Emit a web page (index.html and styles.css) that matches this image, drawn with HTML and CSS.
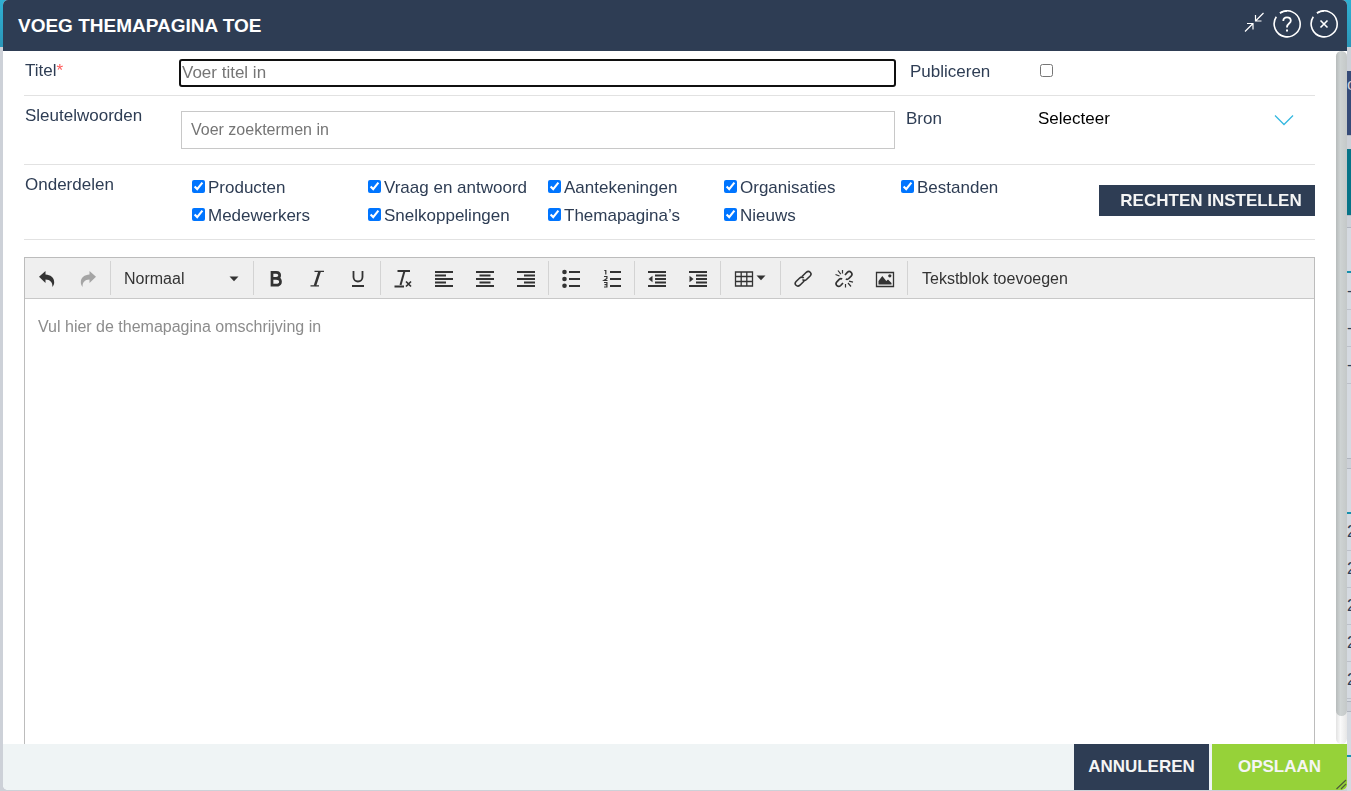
FILE: index.html
```html
<!DOCTYPE html>
<html lang="nl">
<head>
<meta charset="utf-8">
<meta name="viewport" content="width=device-width, initial-scale=1">
<title>Voeg themapagina toe</title>
<link rel="stylesheet" href="styles.css">
</head>
<body>
<div class="backdrop" aria-hidden="true">
  <div class="backdrop-bar"></div>
  <div class="backdrop-side">
    <div class="tile tile-blue">ol</div>
    <div class="tile tile-teal"></div>
    <div class="list list-top">
      <span class="list-head"></span>
      <span class="list-row">-</span><span class="list-row">-</span><span class="list-row">-</span>
    </div>
    <div class="list list-mid">
      <span class="list-head"></span>
      <span class="list-row">2</span><span class="list-row">2</span><span class="list-row">2</span><span class="list-row">2</span><span class="list-row">2</span>
    </div>
    <div class="list list-end"><span class="list-head"></span></div>
  </div>
</div>

<form class="dialog" role="dialog" aria-labelledby="dialog-title">
  <header class="dialog-header">
    <h1 class="dialog-title" id="dialog-title">VOEG THEMAPAGINA TOE</h1>
    <div class="header-actions">
      <button type="button" class="header-btn shrink-btn" aria-label="Verkleinen">
        <svg width="20" height="20" viewBox="0 0 20 20" fill="none" stroke="#fff" stroke-width="1.2"><path d="M19.500 1 11.500 9M11.500 3v6H17.500M1 19.500l8-8M9 17.500v-6H3"/></svg>
      </button>
      <button type="button" class="header-btn" aria-label="Help">
        <svg width="28" height="28" viewBox="0 0 28 28" fill="none" stroke="#fff" stroke-width="1.600"><path d="M3.300 6.700A13 13 0 1 0 7 3"/><path d="M7 3A13 13 0 0 1 14 1"/><path stroke-width="1.800" d="M10.300 11c0-2.400 1.500-3.700 3.700-3.700s3.800 1.300 3.800 3.400c0 2.800-3.800 2.900-3.800 6.300v.5"/><path stroke-width="2" d="M14 19.500v2"/></svg>
      </button>
      <button type="button" class="header-btn" aria-label="Sluiten">
        <svg width="28" height="28" viewBox="0 0 28 28" fill="none" stroke="#fff" stroke-width="1.600"><path d="M3.300 6.700A13 13 0 1 0 7 3"/><path d="M7 3A13 13 0 0 1 14 1"/><path stroke-width="1.600" d="m10.500 10.500 7 7m0-7-7 7"/></svg>
      </button>
    </div>
  </header>

  <div class="dialog-body">
    <div class="fields">
      <div class="row row-title">
        <label class="label" for="titel">Titel<span class="required">*</span></label>
        <input class="title-input" id="titel" type="text" placeholder="Voer titel in" autofocus>
        <div class="side publish">
          <label for="publiceren">Publiceren</label>
          <input class="check" id="publiceren" type="checkbox">
        </div>
      </div>

      <div class="row row-keywords">
        <label class="label" for="sleutelwoorden">Sleutelwoorden</label>
        <input class="keyword-input" id="sleutelwoorden" type="text" placeholder="Voer zoektermen in">
        <div class="side source">
          <label for="bron">Bron</label>
          <div class="select-wrap">
            <select class="select" id="bron"><option>Selecteer</option></select>
            <svg class="select-arrow" width="20" height="12" viewBox="0 0 20 12" fill="none" stroke="#35b8e0" stroke-width="1.300"><path d="m1 1.500 9 9 9-9"/></svg>
          </div>
        </div>
      </div>

      <div class="row row-parts">
        <span class="label" id="parts-label">Onderdelen</span>
        <div class="parts" role="group" aria-labelledby="parts-label">
          <label class="part"><input class="check" type="checkbox" checked>Producten</label>
          <label class="part"><input class="check" type="checkbox" checked>Vraag en antwoord</label>
          <label class="part"><input class="check" type="checkbox" checked>Aantekeningen</label>
          <label class="part"><input class="check" type="checkbox" checked>Organisaties</label>
          <label class="part"><input class="check" type="checkbox" checked>Bestanden</label>
          <label class="part"><input class="check" type="checkbox" checked>Medewerkers</label>
          <label class="part"><input class="check" type="checkbox" checked>Snelkoppelingen</label>
          <label class="part"><input class="check" type="checkbox" checked>Themapagina’s</label>
          <label class="part"><input class="check" type="checkbox" checked>Nieuws</label>
        </div>
        <button type="button" class="rights-btn">RECHTEN INSTELLEN</button>
      </div>

      <div class="editor">
        <div class="toolbar" role="toolbar" aria-label="Opmaak">
          <div class="group">
            <button type="button" class="tool" aria-label="Ongedaan maken"><svg class="icon" viewBox="0 0 20 20"><path fill="#333" d="M2 8.700 8.500 3v3.400c5 .2 8.700 3 8.700 7.800 0 2-.8 3.600-1.900 4.800.6-4.200-2-7.300-6.800-7.400V15z"/></svg></button>
            <button type="button" class="tool" aria-label="Opnieuw"><svg class="icon" viewBox="0 0 20 20"><path fill="#a5a5a5" d="M18 8.700 11.500 3v3.400c-5 .2-8.700 3-8.700 7.800 0 2 .8 3.600 1.900 4.800-.6-4.200 2-7.300 6.800-7.400V15z"/></svg></button>
          </div>
          <div class="group">
            <button type="button" class="format-btn"><span>Normaal</span><svg width="10" height="6" viewBox="0 0 10 6"><path fill="#333" d="M.5.500h9L5 5.200z"/></svg></button>
          </div>
          <div class="group">
            <button type="button" class="tool" aria-label="Vet"><svg class="icon" viewBox="0 0 20 20" fill="none" stroke="#333" stroke-width="2.700"><path d="M5.800 4.300h4.400c4.600 0 4.600 6 0 6H6m4 0c6 0 6 6.900 0 6.900H5.800M6 3v15.500"/></svg></button>
            <button type="button" class="tool" aria-label="Cursief"><svg class="icon" viewBox="0 0 20 20" fill="none" stroke="#333"><path stroke-width="1.400" d="M7.500 3.400H17M3.500 17.900H12"/><path stroke-width="2.500" d="m12.600 3.500-4.700 14.300"/></svg></button>
            <button type="button" class="tool" aria-label="Onderstrepen"><svg class="icon" viewBox="0 0 20 20" fill="none" stroke="#333"><path stroke-width="1.800" d="M5.500 3v6c0 6 9 6 9 0V3"/><path stroke-width="2" d="M4 18h12"/></svg></button>
          </div>
          <div class="group">
            <button type="button" class="tool" aria-label="Opmaak wissen"><svg class="icon" viewBox="0 0 20 20" fill="none" stroke="#333"><path stroke-width="2" d="M4.500 3H17M1.500 18.500H11"/><path stroke-width="2" d="M11.500 3 7.500 17"/><path stroke-width="1.700" d="m13 13.500 5 5m0-5-5 5"/></svg></button>
            <button type="button" class="tool" aria-label="Links uitlijnen"><svg class="icon" viewBox="0 0 20 20" stroke="#333" stroke-width="2"><path d="M1 4h18M1 7.500h11M1 11h18M1 14.500h11M1 18h18"/></svg></button>
            <button type="button" class="tool" aria-label="Centreren"><svg class="icon" viewBox="0 0 20 20" stroke="#333" stroke-width="2"><path d="M1 4h18M4.500 7.500h11M1 11h18M4.500 14.500h11M1 18h18"/></svg></button>
            <button type="button" class="tool" aria-label="Rechts uitlijnen"><svg class="icon" viewBox="0 0 20 20" stroke="#333" stroke-width="2"><path d="M1 4h18M8 7.500h11M1 11h18M8 14.500h11M1 18h18"/></svg></button>
          </div>
          <div class="group">
            <button type="button" class="tool" aria-label="Opsomming"><svg class="icon" viewBox="0 0 20 20" fill="#333" stroke="#333"><path stroke-width="2" d="M8 4h11M8 11h11M8 18h11"/><g stroke="none"><circle cx="3.500" cy="4" r="2.300"/><circle cx="3.500" cy="11" r="2.300"/><circle cx="3.500" cy="17.700" r="2.300"/></g></svg></button>
            <button type="button" class="tool" aria-label="Genummerde lijst"><svg class="icon" viewBox="0 0 20 20" fill="none" stroke="#333"><path stroke-width="2" d="M8 4h11M8 11h11M8 18h11"/><path stroke-width="1.200" d="M2.300 2.500h1.500V6.500M2 8.500h2.900v2L2 12.500h3.500M2 14.500h2.900v4.500H2m.5-2.300h2.300"/></svg></button>
          </div>
          <div class="group">
            <button type="button" class="tool" aria-label="Inspringing verkleinen"><svg class="icon" viewBox="0 0 20 20" stroke="#333" stroke-width="2"><path d="M1 4h18M8 7.500h11M8 11h11M8 14.500h11M1 18h18"/><path fill="#333" stroke="none" d="M5.500 7.700v6.600L1.500 11z"/></svg></button>
            <button type="button" class="tool" aria-label="Inspringing vergroten"><svg class="icon" viewBox="0 0 20 20" stroke="#333" stroke-width="2"><path d="M1 4h18M8 7.500h11M8 11h11M8 14.500h11M1 18h18"/><path fill="#333" stroke="none" d="M1.500 7.700v6.600l4-3.300z"/></svg></button>
          </div>
          <div class="group">
            <button type="button" class="tool table-tool" aria-label="Tabel"><svg class="icon" viewBox="0 0 20 20" fill="none" stroke="#333"><path stroke-width="1.300" d="M1.500 4h17v14h-17zM1.500 8.500h17M1.500 13.500h17M7.200 4v14M12.800 4v14"/></svg><svg width="10" height="6" viewBox="0 0 10 6"><path fill="#333" d="M.5.500h9L5 5.200z"/></svg></button>
          </div>
          <div class="group">
            <button type="button" class="tool" aria-label="Link"><svg class="icon" viewBox="0 0 20 20" fill="none" stroke="#333" stroke-width="1.600"><path d="m9 8.500 4.300-4.200c2.700-2.500 6.300 1.100 3.800 3.700L13.500 11.500c-1.300 1.200-3 1-4 0"/><path d="m11.200 13-4.300 4.200c-2.700 2.500-6.300-1.100-3.800-3.700L6.700 10c1.300-1.200 3-1 4 0"/></svg></button>
            <button type="button" class="tool" aria-label="Link verwijderen"><svg class="icon" viewBox="0 0 20 20" fill="none" stroke="#333" stroke-width="1.700"><path d="m11 7 2.300-2.600c2.600-2.500 6.200 1 3.800 3.700L14.800 10.500c-.9.900-2 1-3 .5M9 15l-2.300 2.500c-2.600 2.500-6.200-1-3.800-3.700L5.200 11.400c.9-.9 2-1 3-.5"/><path stroke-width="1.200" d="M8.500 2v3.500M4 2.500l2.800 3.700M1.500 6.500l4 1.500M11.500 16v3.500M14 15l3 3.500M15 13.200l4 1"/></svg></button>
            <button type="button" class="tool" aria-label="Afbeelding"><svg class="icon" viewBox="0 0 20 20" fill="none" stroke="#333"><path stroke-width="1.300" d="M1.500 4.500h17v14h-17z"/><g fill="#333" stroke="none"><circle cx="14.800" cy="7.800" r="1.600"/><path d="M3.500 16.500v-3.500l3.800-5 4 5 1.700-1.500 3.500 3.500V16.500z"/></g></svg></button>
          </div>
          <button type="button" class="block-btn">Tekstblok toevoegen</button>
        </div>
        <textarea class="editor-text" aria-label="Omschrijving" placeholder="Vul hier de themapagina omschrijving in"></textarea>
      </div>
    </div>
    <div class="scrollbar"><div class="scroll-thumb"></div></div>
  </div>

  <footer class="dialog-footer">
    <button type="button" class="footer-btn cancel">ANNULEREN</button>
    <button type="submit" class="footer-btn save">OPSLAAN</button>
    <svg class="resize" width="12" height="12" viewBox="0 0 12 12" stroke="#4d5b3a" stroke-width="1.200"><path d="M1.500 11 11 2M6 11l5-5"/></svg>
  </footer>
</form>
</body>
</html>
```

FILE: styles.css
```css
* { box-sizing: border-box; }

body {
  margin: 0;
  height: 100vh;
  overflow: hidden;
  background: #cdd1d8;
  color: #2e3d54;
  font: 17px/20px "Liberation Sans", Arial, sans-serif;
}

button, input, select, textarea {
  margin: 0;
  font: inherit;
  color: inherit;
}

button {
  padding: 0;
  border: 0;
  background: none;
  cursor: pointer;
}

svg { display: block; flex: none; }

/* Page behind the dialog */
.backdrop {
  display: flex;
  flex-direction: column;
  height: 100%;
  font-size: 16px;
}

.backdrop-bar {
  flex: none;
  height: 47px;
  background: linear-gradient(#2fb0d3, #2b96b8);
}

.backdrop-side {
  align-self: flex-end;
  width: 4px;
  margin-top: 24px;
  overflow: hidden;
}

.tile { height: 65px; margin-bottom: 13px; border-bottom: 1px solid #b5b9c2; color: #cdd1d8; }
.tile-blue { padding-top: 4px; background: #364b78; }
.tile-teal { height: 67px; margin-bottom: 11px; background: #087488; }

.list {
  margin-bottom: 9px;
  background: #d5dae1;
  border: solid #b0b5bf;
  border-width: 1px 0;
}

.list-top { height: 232px; }
.list-mid { height: 234px; }
.list-end { height: 90px; }
.list-head { display: block; height: 45px; border-bottom: 2px solid #1590ad; }
.list-row { display: block; height: 37px; padding-top: 8px; border-bottom: 1px solid #bdc1ca; }

/* Dialog */
.dialog {
  position: fixed;
  inset: 0 4px 1px 3px;
  display: flex;
  flex-direction: column;
  overflow: hidden;
  border-radius: 5px;
  background: #fff;
}

.dialog-header {
  flex: none;
  display: flex;
  align-items: center;
  justify-content: space-between;
  height: 51px;
  padding: 0 9px 0 15px;
  background: #2e3d54;
  color: #fff;
}

.dialog-title { margin: 0; font-size: 19px; line-height: 24px; }
.header-actions { display: flex; gap: 9px; padding-bottom: 3px; }
.header-btn { height: 28px; }
.shrink-btn { padding-bottom: 4px; }

.dialog-body { flex: 1; min-height: 0; display: flex; }

.fields {
  flex: 1;
  min-width: 0;
  display: flex;
  flex-direction: column;
  padding: 0 21px;
}

.row {
  flex: none;
  display: grid;
  grid-template-columns: 157px 1fr 420px;
  align-items: start;
  border-bottom: 1px solid #e2e2e2;
}

.label { padding-left: 1px; }
.required { color: #ff5c5c; }

.row-title { min-height: 45px; padding-top: 8px; }
.row-title .label { padding-top: 2px; }

.title-input {
  height: 28px;
  margin: 0 -1px 0 -2px;
  padding: 0 1px;
  border: 2px solid #101010;
  border-radius: 3px;
  outline: 0;
  background: #fff;
  caret-color: #000;
}

::placeholder { color: #757575; opacity: 1; }

.side { display: grid; grid-template-columns: 132px 1fr; padding-left: 11px; }
.publish { padding: 3px 0 0 15px; }
.check { width: 13px; height: 13px; accent-color: #0075ff; }
.publish .check { margin: 2px -2px; }

.row-keywords { min-height: 69px; padding-top: 10px; }

.keyword-input {
  height: 38px;
  margin-top: 5px;
  padding: 0 9px;
  border: 1px solid #c8c8c8;
  background: #fff;
  font-size: 16px;
}

.source { padding-top: 3px; }
.select-wrap { position: relative; }

.select {
  width: 100%;
  height: 20px;
  padding: 0;
  border: 0;
  appearance: none;
  background: none;
  color: #000;
}

.select-arrow { position: absolute; top: 5px; right: 21px; pointer-events: none; }

.row-parts {
  grid-template-columns: 157px 1fr 216px;
  min-height: 75px;
  padding-top: 10px;
}

.parts {
  display: grid;
  grid-template-columns: 176fr 180fr 176fr 177fr 176fr;
  grid-auto-rows: 28px;
  padding: 0 22px 0 11px;
}

.part { display: flex; align-items: flex-start; gap: 3px; padding-top: 3px; white-space: nowrap; }
.part .check { margin-top: 2px; }

.rights-btn {
  height: 31px;
  margin-top: 10px;
  padding: 0 12px 0 20px;
  background: #2e3d54;
  color: #f5f5f5;
  font-weight: bold;
  white-space: nowrap;
}

/* Editor */
.editor {
  flex: 1;
  min-height: 0;
  display: flex;
  flex-direction: column;
  margin-top: 17px;
  border: 1px solid #bcbcbc;
  border-bottom: 0;
  font-size: 16px;
}

.toolbar {
  flex: none;
  display: flex;
  align-items: center;
  height: 41px;
  border-bottom: 1px solid #c8c8c8;
  background: #efefef;
  color: #333;
}

.group {
  display: flex;
  height: 34px;
  padding: 0 2px 0 1px;
  border-right: 1px solid #d3d3d3;
}

.tool { display: flex; align-items: center; justify-content: center; width: 41px; }
.icon { width: 20px; height: 20px; }
.table-tool { width: 56px; gap: 2px; }

.format-btn {
  display: flex;
  align-items: center;
  justify-content: space-between;
  width: 139px;
  padding: 2px 12px 0;
}

.block-btn { padding: 2px 14px 0; }

.editor-text {
  flex: 1;
  width: 100%;
  padding: 18px 13px;
  border: 0;
  outline: 0;
  resize: none;
  background: #fff;
}

.editor-text::placeholder { color: #8c8c8c; }

.scrollbar {
  flex: none;
  width: 11px;
  border-radius: 6px;
  background: linear-gradient(90deg, #e2e2e2, #fafafa 40%, #e6e6e6);
}

.scroll-thumb {
  height: 96%;
  border-radius: 6px;
  background: linear-gradient(90deg, #b7bbbb, #ced3d3 40%, #c4c8c8);
}

.dialog-footer {
  flex: none;
  position: relative;
  display: flex;
  justify-content: flex-end;
  gap: 3px;
  background: #eff4f5;
}

.footer-btn { width: 135px; height: 46px; color: #f5f5f5; font-weight: bold; }
.cancel { background: #2e3d54; }
.save { background: #96d239; }
.resize { position: absolute; right: 0; bottom: 0; }
```
